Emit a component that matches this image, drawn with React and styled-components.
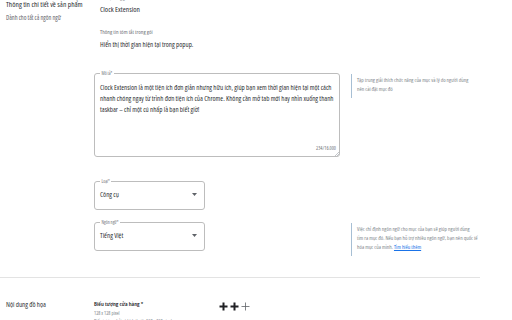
import React from "react";
import styled, { createGlobalStyle } from "styled-components";

const Global = createGlobalStyle`
  html, body { margin: 0; padding: 0; background: #fff; }
  body { font-family: "Open Sans", "Roboto", "Liberation Sans", sans-serif; font-stretch: 75%; color: #2d2f33; }
`;

const Page = styled.div`
  width: 480px;
  height: 320px;
  overflow: hidden;
`;

const Section = styled.section`
  display: grid;
  grid-template-columns: 88px 1fr;
  padding-left: 6px;
  border-top: ${p => (p.$divider ? "1px solid #e3e3e3" : "none")};
  padding-top: ${p => p.$pt || 0}px;
  padding-bottom: ${p => p.$pb || 0}px;
`;

const SideTitle = styled.div`
  font-size: ${p => p.$size || 7.5}px;
  line-height: 9px;
  color: #2d2f33;
`;

const SideSub = styled.div`
  font-size: 6.3px;
  line-height: 8px;
  margin-top: 5px;
  color: #5f6368;
`;

const Fields = styled.div`
  display: flex;
  flex-direction: column;
`;

const TinyLabel = styled.div`
  font-size: ${p => p.$size || 5.8}px;
  line-height: 6px;
  color: #6f7378;
  padding-left: 6px;
  margin-top: ${p => p.$mt || 0}px;
`;

const Value = styled.div`
  font-size: ${p => p.$size || 7}px;
  line-height: 10px;
  padding-left: 6px;
  margin-top: ${p => p.$mt || 0}px;
`;

const FieldRow = styled.div`
  display: grid;
  grid-template-columns: 246px 1fr;
  column-gap: 11px;
  align-items: start;
  margin-top: ${p => p.$mt || 0}px;
`;

const Box = styled.fieldset`
  margin: 0;
  padding: 0 5px;
  border: 1px solid #bdbdbd;
  border-radius: 3px;
  min-width: 0;
  position: relative;
  width: ${p => p.$w || 246}px;
  height: ${p => p.$h}px;
  box-sizing: border-box;
`;

const Legend = styled.legend`
  font-size: 4.5px;
  line-height: 6px;
  padding: 0 1.5px;
  margin-left: 0;
  color: #6f7378;
`;

const AreaText = styled.div`
  font-size: 7px;
  line-height: 11.2px;
  padding-top: 6px;
  width: 234px;
`;

const Counter = styled.div`
  position: absolute;
  right: 3px;
  bottom: 5px;
  font-size: 5px;
  color: #6f7378;
`;

const Grip = styled.svg`
  position: absolute;
  right: 0;
  bottom: 0;
`;

const SelectInner = styled.div`
  display: flex;
  align-items: center;
  justify-content: space-between;
  height: 20px;
  font-size: 7px;
  padding-right: 2px;
`;

const Hint = styled.div`
  border-left: 1.5px solid #a7bfd4;
  margin-top: 4px;
  padding: 2px 0 4px 5px;
  font-size: 5.5px;
  line-height: 9px;
  color: #80868b;
  white-space: nowrap;
  justify-self: start;
`;

const HintLink = styled.a`
  color: #1a73e8;
  text-decoration: underline;
`;

const AssetTitle = styled.div`
  font-size: 6px;
  line-height: 9px;
  font-weight: 600;
  color: #202124;
`;

const AssetSub = styled.div`
  font-size: 5px;
  line-height: 8px;
  color: #80868b;
`;

const AssetRow = styled.div`
  display: grid;
  grid-template-columns: 125px 1fr;
  align-items: start;
`;

const Plusses = styled.div`
  display: flex;
  gap: 2px;
  align-items: center;
  margin-top: 2px;
`;

const Caret = () => (
  <svg width="5" height="3" viewBox="0 0 5 3"><path d="M0 0h5L2.5 3z" fill="#5f6368" /></svg>
);

const Plus = ({ w }) => (
  <svg width="9" height="9" viewBox="0 0 9 9">
    <path d="M4.5 0.5v8M0.5 4.5h8" stroke={w > 1 ? "#202124" : "#5f6368"} strokeWidth={w} fill="none" />
  </svg>
);

export default function App() {
  return (
    <Page>
      <Global />
      <Section $pb={21}>
        <div>
          <SideTitle>Thông tin chi tiết về sản phẩm</SideTitle>
          <SideSub>Dành cho tất cả ngôn ngữ</SideSub>
        </div>
        <Fields>
          <TinyLabel $size={4.5} $mt={-5}>Tên mục trong gói</TinyLabel>
          <Value $size={7.5} $mt={3}>Clock Extension</Value>
          <TinyLabel $mt={15}>Thông tin tóm tắt trong gói</TinyLabel>
          <Value $mt={5}>Hiển thị thời gian hiện tại trong popup.</Value>
          <FieldRow $mt={20}>
            <Box $h={87}>
              <Legend>Mô tả*</Legend>
              <AreaText>
                Clock Extension là một tiện ích đơn giản nhưng hữu ích, giúp bạn xem thời gian hiện tại một cách nhanh chóng ngay từ trình đơn tiện ích của Chrome. Không cần mở tab mới hay nhìn xuống thanh taskbar – chỉ một cú nhấp là bạn biết giờ!
              </AreaText>
              <Counter>234/16.000</Counter>
              <Grip width="4" height="4" viewBox="0 0 4 4"><path d="M4 0L0 4M4 2L2 4" stroke="#9aa0a6" strokeWidth="0.6" /></Grip>
            </Box>
            <Hint>
              Tập trung giải thích chức năng của mục và lý do người dùng<br />
              nên cài đặt mục đó
            </Hint>
          </FieldRow>
          <FieldRow $mt={21}>
            <Box $w={111} $h={32}>
              <Legend>Loại*</Legend>
              <SelectInner>Công cụ<Caret /></SelectInner>
            </Box>
          </FieldRow>
          <FieldRow $mt={9}>
            <Box $w={111} $h={32}>
              <Legend>Ngôn ngữ*</Legend>
              <SelectInner>Tiếng Việt<Caret /></SelectInner>
            </Box>
            <Hint>
              Việc chỉ định ngôn ngữ cho mục của bạn sẽ giúp người dùng<br />
              tìm ra mục đó. Nếu bạn hỗ trợ nhiều ngôn ngữ, bạn nên quốc tế<br />
              hóa mục của mình. <HintLink>Tìm hiểu thêm</HintLink>
            </Hint>
          </FieldRow>
        </Fields>
      </Section>
      <Section $divider $pt={22}>
        <SideTitle $size={7}>Nội dung đồ họa</SideTitle>
        <AssetRow>
          <div>
            <AssetTitle>Biểu tượng cửa hàng *</AssetTitle>
            <AssetSub>128 x 128 pixel</AssetSub>
            <AssetSub>Biểu tượng phải có kích thước 128 x 128 pixel</AssetSub>
          </div>
          <Plusses>
            <Plus w={2} />
            <Plus w={2} />
            <Plus w={0.8} />
          </Plusses>
        </AssetRow>
      </Section>
    </Page>
  );
}
